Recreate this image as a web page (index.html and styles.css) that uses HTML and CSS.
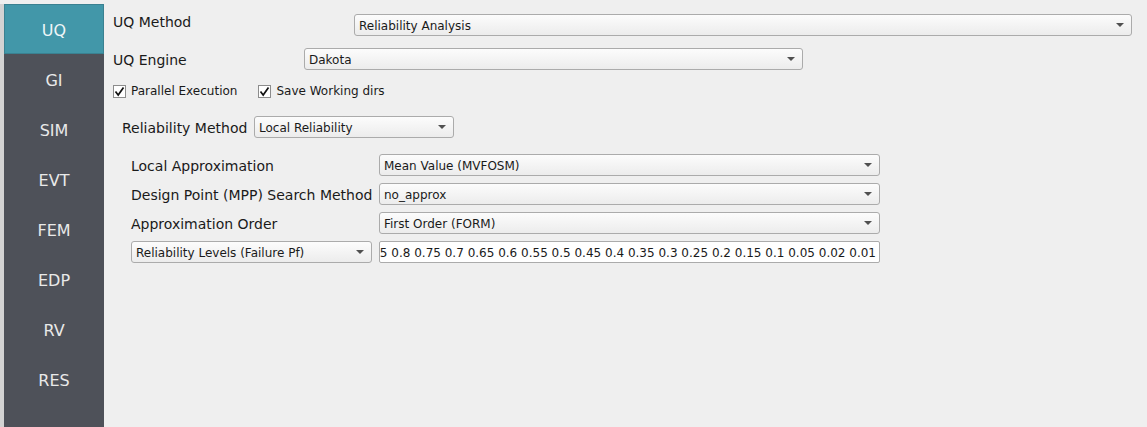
FILE: index.html
```html
<!DOCTYPE html>
<html>
<head>
<meta charset="utf-8">
<link rel="stylesheet" href="styles.css">
</head>
<body>
<div class="app">
  <nav class="sidebar">
    <div class="nav-item active">UQ</div>
    <div class="nav-item">GI</div>
    <div class="nav-item">SIM</div>
    <div class="nav-item">EVT</div>
    <div class="nav-item">FEM</div>
    <div class="nav-item">EDP</div>
    <div class="nav-item">RV</div>
    <div class="nav-item">RES</div>
  </nav>
  <main class="main">
    <div class="row row-method">
      <span class="label top">UQ Method</span>
      <div class="combo combo-method"><span>Reliability Analysis</span><i class="arrow"></i></div>
    </div>
    <div class="row row-engine">
      <span class="label">UQ Engine</span>
      <div class="combo combo-engine"><span>Dakota</span><i class="arrow"></i></div>
    </div>
    <div class="row row-checks">
      <label class="check"><span class="box"><svg width="11" height="11" viewBox="0 0 11 11"><path d="M1.5 5.5 L4.2 9 L9.5 1.5" fill="none" stroke="#111" stroke-width="1.7"/></svg></span>Parallel Execution</label>
      <label class="check"><span class="box"><svg width="11" height="11" viewBox="0 0 11 11"><path d="M1.5 5.5 L4.2 9 L9.5 1.5" fill="none" stroke="#111" stroke-width="1.7"/></svg></span>Save Working dirs</label>
    </div>
    <div class="row row-rel">
      <span class="label">Reliability Method</span>
      <div class="combo combo-rel"><span>Local Reliability</span><i class="arrow"></i></div>
    </div>
    <div class="grid">
      <span class="label">Local Approximation</span>
      <div class="combo"><span>Mean Value (MVFOSM)</span><i class="arrow"></i></div>
      <span class="label">Design Point (MPP) Search Method</span>
      <div class="combo"><span>no_approx</span><i class="arrow"></i></div>
      <span class="label">Approximation Order</span>
      <div class="combo"><span>First Order (FORM)</span><i class="arrow"></i></div>
      <div class="combo combo-levels"><span>Reliability Levels (Failure Pf)</span><i class="arrow"></i></div>
      <div class="lineedit"><span>0.99 0.95 0.9 0.85 0.8 0.75 0.7 0.65 0.6 0.55 0.5 0.45 0.4 0.35 0.3 0.25 0.2 0.15 0.1 0.05 0.02 0.01</span></div>
    </div>
  </main>
</div>
</body>
</html>
```

FILE: styles.css
```css
html, body {
  margin: 0;
  padding: 0;
  background: #efefef;
  font-family: "DejaVu Sans", sans-serif;
  color: #1a1a1a;
}
.app {
  display: flex;
  height: 427px;
  overflow: hidden;
}
.sidebar {
  width: 100px;
  margin-top: 4px;
  border-left: 4px solid #d3d3d3;
  background: #4e5159;
  display: flex;
  flex-direction: column;
  flex-shrink: 0;
}
.nav-item {
  height: 50px;
  display: flex;
  align-items: center;
  justify-content: center;
  color: #e9e9e9;
  font-size: 16px;
  box-sizing: border-box;
  padding-top: 2px;
}
.nav-item.active {
  background: #4297a9;
  border: 1px solid #3a8191;
  color: #eef6f8;
}
.main {
  flex: 1;
  padding-left: 9px;
  padding-right: 15px;
  padding-top: 14px;
  display: flex;
  flex-direction: column;
}
.row {
  display: flex;
  align-items: center;
}
.label {
  font-size: 14px;
  white-space: nowrap;
  padding-top: 2px;
}
.label.top {
  align-self: flex-start;
  padding-top: 0;
}
.row-method .label { width: 241px; }
.row-engine { margin-top: 12px; }
.row-engine .label { width: 191px; }
.combo {
  position: relative;
  height: 22px;
  box-sizing: border-box;
  border: 1px solid #ababab;
  border-radius: 3px;
  background: linear-gradient(#fcfcfc, #ececec);
  font-size: 12px;
  display: flex;
  align-items: center;
  padding-left: 4px;
  padding-top: 2px;
  white-space: nowrap;
}
.combo .arrow {
  position: absolute;
  right: 7px;
  top: 8px;
  width: 0;
  height: 0;
  border-left: 4px solid transparent;
  border-right: 4px solid transparent;
  border-top: 4px solid #505050;
}
.combo-method { flex: 1; }
.combo-engine { width: 499px; }
.row-checks {
  margin-top: 14px;
  font-size: 12px;
  gap: 21px;
}
.check {
  display: flex;
  align-items: center;
  gap: 5px;
}
.box {
  width: 13px;
  height: 13px;
  box-sizing: border-box;
  border: 1px solid #8c8c8c;
  background: #fff;
  display: flex;
  align-items: center;
  justify-content: center;
}
.row-rel {
  margin-top: 18px;
  padding-left: 9px;
}
.row-rel .label { width: 132px; }
.combo-rel { width: 200px; }
.grid {
  margin-top: 16px;
  margin-left: 18px;
  display: grid;
  grid-template-columns: 248px 501px;
  grid-auto-rows: 22px;
  row-gap: 7px;
  align-items: center;
}
.combo-levels { width: 241px; }
.lineedit {
  height: 22px;
  box-sizing: border-box;
  border: 1px solid #ababab;
  border-radius: 2px;
  background: #fff;
  font-size: 12px;
  display: flex;
  align-items: center;
  justify-content: flex-end;
  overflow: hidden;
  white-space: nowrap;
  padding-right: 3px;
  padding-top: 2px;
}
```
